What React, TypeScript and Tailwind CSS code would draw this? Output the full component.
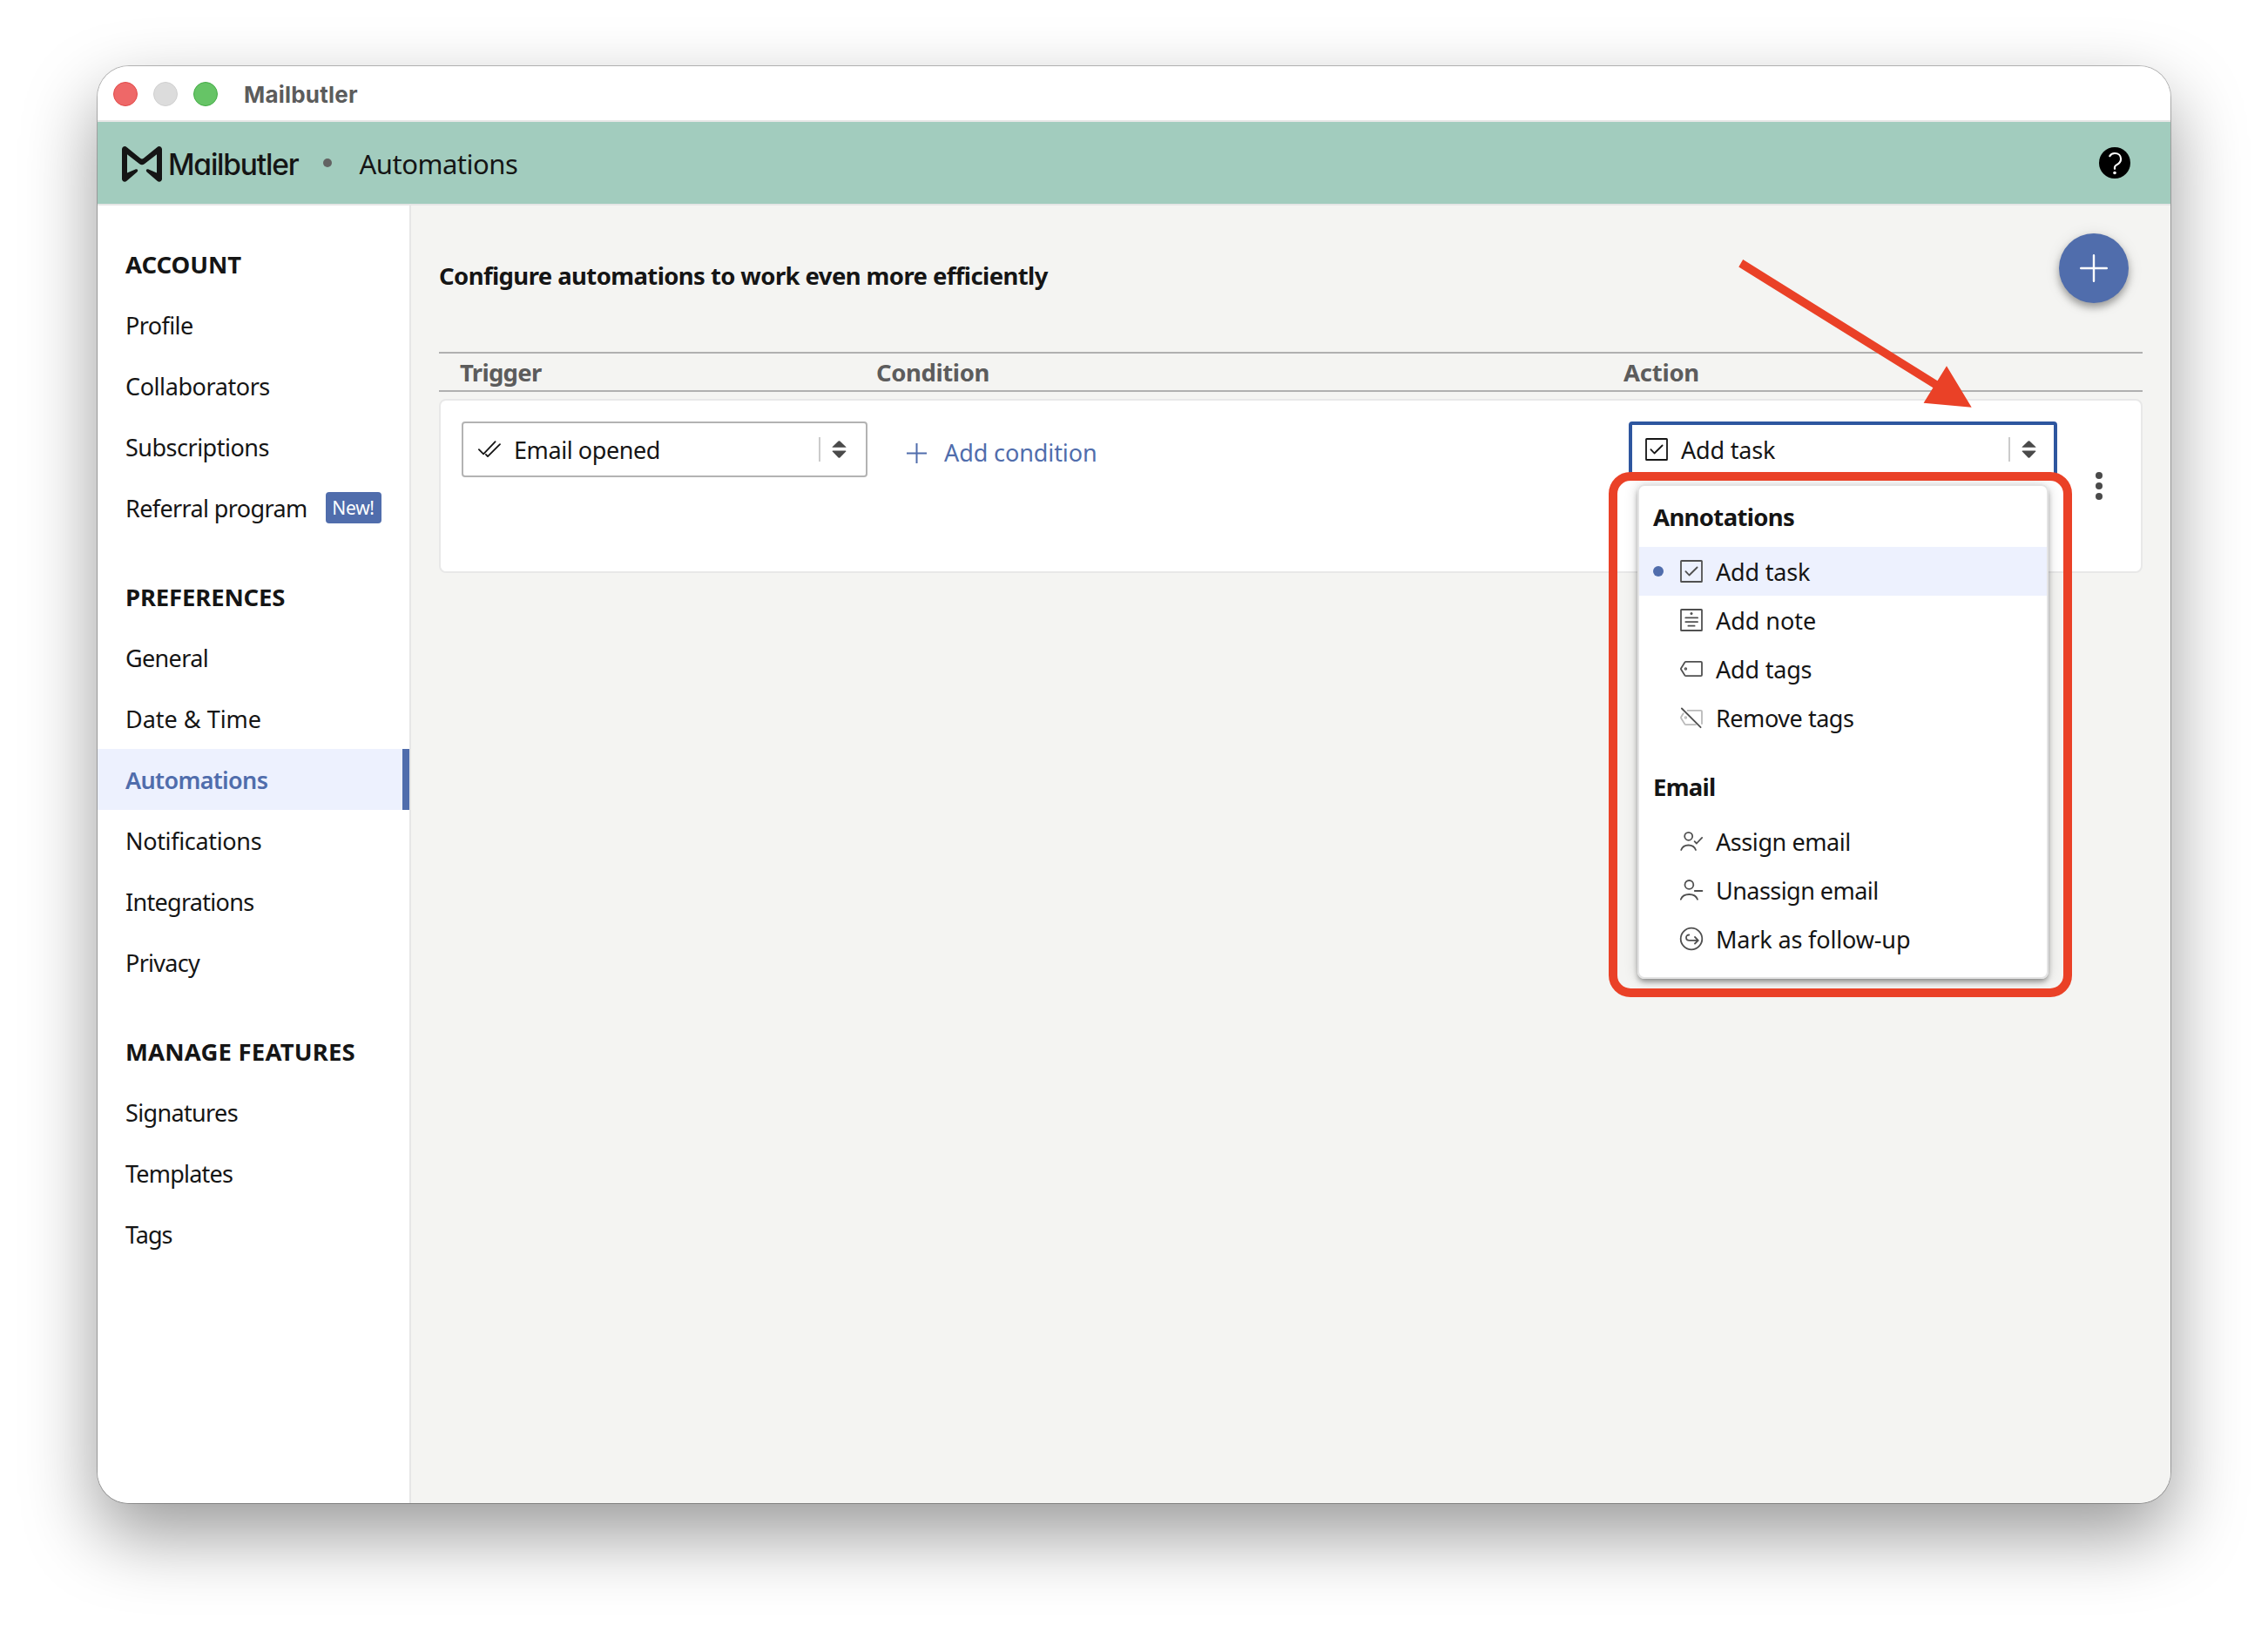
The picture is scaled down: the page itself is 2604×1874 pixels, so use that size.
import type { ReactNode } from "react";
import clsx from "clsx";

interface NavItem {
  label: string;
  tracking: string;
  badge?: string;
  active?: boolean;
}

interface NavSection {
  title: string;
  tracking: string;
  items: NavItem[];
}

interface ActionOption {
  label: string;
  tracking: string;
  icon: ReactNode;
  selected?: boolean;
}

interface ActionGroup {
  title: string;
  tracking: string;
  options: ActionOption[];
}

const sections: NavSection[] = [
  {
    title: "ACCOUNT",
    tracking: "tracking-[-0.05px]",
    items: [
      { label: "Profile", tracking: "tracking-[-0.6px]" },
      { label: "Collaborators", tracking: "tracking-[-0.42px]" },
      { label: "Subscriptions", tracking: "tracking-[-0.5px]" },
      { label: "Referral program", tracking: "tracking-[-0.63px]", badge: "New!" },
    ],
  },
  {
    title: "PREFERENCES",
    tracking: "tracking-[-0.15px]",
    items: [
      { label: "General", tracking: "tracking-[-0.65px]" },
      { label: "Date & Time", tracking: "tracking-[0px]" },
      { label: "Automations", tracking: "tracking-[-0.65px]", active: true },
      { label: "Notifications", tracking: "tracking-[-0.33px]" },
      { label: "Integrations", tracking: "tracking-[-0.7px]" },
      { label: "Privacy", tracking: "tracking-[-0.7px]" },
    ],
  },
  {
    title: "MANAGE FEATURES",
    tracking: "tracking-[0.18px]",
    items: [
      { label: "Signatures", tracking: "tracking-[-0.65px]" },
      { label: "Templates", tracking: "tracking-[-0.8px]" },
      { label: "Tags", tracking: "tracking-[-1px]" },
    ],
  },
];

const actionGroups: ActionGroup[] = [
  {
    title: "Annotations",
    tracking: "tracking-[-0.65px]",
    options: [
      { label: "Add task", tracking: "tracking-[-0.2px]", icon: <TaskIcon />, selected: true },
      { label: "Add note", tracking: "tracking-[-0.05px]", icon: <NoteIcon /> },
      { label: "Add tags", tracking: "tracking-[-0.2px]", icon: <TagIcon /> },
      { label: "Remove tags", tracking: "tracking-[-0.45px]", icon: <RemoveTagIcon /> },
    ],
  },
  {
    title: "Email",
    tracking: "tracking-[-0.7px]",
    options: [
      { label: "Assign email", tracking: "tracking-[-0.42px]", icon: <AssignIcon /> },
      { label: "Unassign email", tracking: "tracking-[-0.55px]", icon: <UnassignIcon /> },
      { label: "Mark as follow-up", tracking: "tracking-[-0.15px]", icon: <FollowUpIcon /> },
    ],
  },
];

function Icon({ children }: { children: ReactNode }) {
  return (
    <svg
      className="h-[26px] w-[26px] shrink-0 overflow-visible"
      viewBox="0 0 26 26"
      fill="none"
      stroke="currentColor"
      strokeWidth="1.8"
      strokeLinecap="round"
      strokeLinejoin="round"
    >
      {children}
    </svg>
  );
}

function TaskIcon() {
  return (
    <Icon>
      <rect x="1" y="1" width="24" height="24" rx="0.6" />
      <path d="M6.4 13.2l4.1 4.3 9.1-9" />
    </Icon>
  );
}

function NoteIcon() {
  return (
    <Icon>
      <rect x="1" y="1" width="24" height="24" rx="0.6" />
      <circle cx="13" cy="5.6" r="1.5" fill="currentColor" stroke="none" />
      <path d="M6.3 10.4h13.8M6.3 15.1h13.8M9.4 19.7h7.2" />
    </Icon>
  );
}

function TagIcon() {
  return (
    <Icon>
      <path d="M6.8 4.9h17.1q1.1 0 1.1 1.1v14q0 1.1-1.1 1.1H6.8q-.9 0-1.4-.7L1.2 13.8q-.5-.8 0-1.6L5.4 5.6q.5-.7 1.4-.7z" />
      <circle cx="6.4" cy="13" r="1.1" strokeWidth="1.3" />
    </Icon>
  );
}

function RemoveTagIcon() {
  return (
    <Icon>
      <g stroke="#bababa">
        <path d="M8.6 4.9h15.3q1.1 0 1.1 1.1v14" />
        <path d="M18 21.1H6.8q-.9 0-1.4-.7L1.2 13.8q-.5-.8 0-1.6l2.5-4" />
        <circle cx="6.4" cy="13" r="1.1" strokeWidth="1.3" />
      </g>
      <path d="M1.9 2.5l21.7 21.7" />
    </Icon>
  );
}

function AssignIcon() {
  return (
    <Icon>
      <circle cx="9.7" cy="7.3" r="4.5" />
      <path d="M1.2 23q2-5.5 8.4-5.5T18 23M16.6 13.2l2.3 2.3 6.3-6.6" />
    </Icon>
  );
}

function UnassignIcon() {
  return (
    <Icon>
      <circle cx="10.4" cy="6.9" r="4.9" />
      <path d="M.8 23.7q2.2-5.7 9.6-5.7t9.6 5.7M16.8 14h8.6" />
    </Icon>
  );
}

function FollowUpIcon() {
  return (
    <Icon>
      <circle cx="13" cy="13" r="12.3" />
      <path d="M10.3 8.5C8.2 8.5 7 9.7 7 11.4c0 2.1 1.4 3.4 3.6 3.4h10M17 11l3.8 3.8L17 18.5" />
    </Icon>
  );
}

function Chevrons() {
  return (
    <svg className="h-5 w-[17px]" viewBox="0 0 17 20" fill="#4a4a4a">
      <path d="M7.6.6q.9-.8 1.8 0l6.8 6.3q.7.9-.4.9H1.2q-1.1 0-.4-.9z" />
      <path d="M7.6 19.4q.9.8 1.8 0l6.8-6.9q.7-.9-.4-.9H1.2q-1.1 0-.4.9z" />
    </svg>
  );
}

function TitleBar() {
  return (
    <div className="flex h-16 shrink-0 items-center border-b-2 border-[#e6e6e6] bg-white pl-[18px]">
      <div className="mt-0.5 flex gap-[18px]">
        <span className="h-7 w-7 rounded-full border border-[#e14b4a] bg-[#ee6868]" />
        <span className="h-7 w-7 rounded-full border border-[#cfcfcf] bg-[#dcdcdc]" />
        <span className="h-7 w-7 rounded-full border border-[#45ac47] bg-[#66c466]" />
      </div>
      <span className="ml-[30px] mt-1 font-['Inter',sans-serif] text-[26px] font-bold leading-8 tracking-[0.2px] text-[#5c5c5c]">
        Mailbutler
      </span>
    </div>
  );
}

function Header() {
  return (
    <div className="flex h-24 shrink-0 items-center border-b-2 border-[#e6e6e6] bg-[#a2ccbe] pl-7 pr-[46px]">
      <svg className="mt-0.5 h-[41px] w-[46px]" viewBox="0 0 46 41" fill="#151515">
        <path d="M0 3.5C0 .6 3.2-.9 5.5.9L21.2 13.7q1.8 1.4 3.6 0L40.5.9C42.8-.9 46 .6 46 3.5V37.5c0 2.9-3.3 4.3-5.5 2.3L28.6 29.5c-1.8-1.7-.4-3.9 2-3L40 30.6V9.2L25.8 20.3q-2.8 2.1-5.6 0L6 9.2v21.4l9.4-4.1c2.4-.9 3.8 1.3 2 3L5.5 39.8C3.3 41.8 0 40.4 0 37.5z" />
      </svg>
      <span className="ml-[7px] mt-1 font-['Inter',sans-serif] text-[33.5px] font-medium leading-10 tracking-[-1.2px] text-[#151515] [font-feature-settings:'cv11']">
        Mailbutler
      </span>
      <span className="ml-7 h-2.5 w-2.5 rounded-full bg-[#636363]" />
      <span className="ml-8 mt-0.5 text-[31px] leading-10 tracking-[-0.5px]">Automations</span>
      <svg className="ml-auto h-9 w-9" viewBox="0 0 36 36" fill="none">
        <circle cx="18" cy="18" r="18" fill="#000" />
        <path
          d="M12.3 10.2C13.3 8.1 15.3 7 18 7c4.2 0 7.1 2.6 7.1 6.5 0 4.1-2.6 5.6-5 6.9-1.5.8-2.1 1.4-2.1 2.8v1.6"
          stroke="#fff"
          strokeWidth="2.2"
          strokeLinecap="round"
        />
        <circle cx="18" cy="29.5" r="1.8" fill="#fff" />
      </svg>
    </div>
  );
}

function Sidebar() {
  return (
    <nav className="flex w-[360px] shrink-0 flex-col gap-8 border-r-2 border-[#e6e6e6] bg-white pt-8">
      {sections.map((section) => (
        <div key={section.title}>
          <div className={clsx("flex h-[70px] items-center pl-8 pt-0.5 text-[27.5px] font-bold", section.tracking)}>
            {section.title}
          </div>
          {section.items.map((item) => (
            <div
              key={item.label}
              className={clsx(
                "flex h-[70px] items-center pl-8",
                item.active && "border-r-8 border-[#506dac] bg-[#edf1fe] font-semibold text-[#506dac]"
              )}
            >
              <span className={clsx("pt-0.5", item.tracking)}>{item.label}</span>
              {item.badge && (
                <span className="ml-[21px] flex h-9 w-16 items-center justify-center rounded bg-[#506dac] text-[21px] tracking-[-0.3px] text-white">
                  {item.badge}
                </span>
              )}
            </div>
          ))}
        </div>
      ))}
    </nav>
  );
}

function ActionMenu() {
  return (
    <div className="absolute left-2.5 top-[72px] w-[472px] overflow-hidden rounded-lg border-2 border-[#e4e4e4] bg-white pb-4">
      {actionGroups.map((group, index) => (
        <div key={group.title} className={clsx(index !== 0 && "mt-4")}>
          <div className={clsx("flex h-[70px] items-center pl-4 pt-0.5 text-[27.5px] font-bold", group.tracking)}>
            {group.title}
          </div>
          {group.options.map((option) => (
            <div
              key={option.label}
              className={clsx("flex h-14 items-center pl-4", option.selected && "bg-[#edf1fe]")}
            >
              <span className={clsx("mr-[19px] h-3 w-3 rounded-full", option.selected && "bg-[#506dac]")} />
              <span className="text-[#505050]">{option.icon}</span>
              <span className={clsx("ml-[15px] pt-0.5", option.tracking)}>{option.label}</span>
            </div>
          ))}
        </div>
      ))}
    </div>
  );
}

function AutomationRow() {
  return (
    <div className="mt-2 flex h-[200px] rounded-lg border-2 border-[#e8e8e8] bg-white pl-6 pr-9 pt-6">
      <div className="flex h-16 w-[466px] items-center rounded border-2 border-[#b3b3b3] pl-[17px] pr-[22px]">
        <svg
          className="h-5 w-[26px]"
          viewBox="0 0 26 20"
          fill="none"
          stroke="#151515"
          strokeWidth="1.8"
          strokeLinecap="round"
          strokeLinejoin="round"
        >
          <path d="M.9 10.2l5.2 5.2L19.6 1.2" />
          <path d="M8.9 15.9l2.1 2.2L25 4.2" />
        </svg>
        <span className="ml-[15px] pt-0.5 tracking-[-0.42px]">Email opened</span>
        <span className="ml-auto mr-[13px] h-7 w-0.5 bg-[#cbcbcb]" />
        <Chevrons />
      </div>

      <div className="ml-[45px] mt-1 flex h-16 grow items-center text-[#506dac]">
        <svg className="h-[23px] w-[23px]" viewBox="0 0 23 23" stroke="currentColor" strokeWidth="2">
          <path d="M11.5 0v23M0 11.5h23" />
        </svg>
        <span className="ml-5 tracking-[-0.1px]">Add condition</span>
      </div>

      <div className="relative h-16 w-[492px]">
        <div className="flex h-16 items-center rounded border-4 border-[#2e569f] pl-[15px] pr-5">
          <TaskIcon />
          <span className="ml-[15px] pt-0.5 tracking-[-0.2px]">Add task</span>
          <span className="ml-auto mr-[13px] h-7 w-0.5 bg-[#cbcbcb]" />
          <Chevrons />
        </div>
        <div className="absolute left-2.5 top-[72px] h-[568px] w-[472px] rounded-lg shadow-[0_4px_6px_-1px_rgba(0,0,0,0.4),0_0_16px_rgba(0,0,0,0.16)]" />
        <ActionMenu />
        <div className="absolute -left-[23px] top-[58px] h-[603px] w-[532px] rounded-[25px] border-10 border-[#ea4127]" />
        <svg
          className="absolute -top-[188px] left-[124px] h-[174px] w-[272px]"
          viewBox="1994 296 272 174"
          fill="#ea4127"
        >
          <path d="M2001.2 298L2224.5 437.3 2235 420.3 2263.7 467.7 2208.6 462.7 2219.4 445.3 1996.3 306.5z" />
        </svg>
      </div>

      <div className="mb-6 ml-9 flex w-6 flex-col items-center justify-center gap-1">
        <span className="h-2 w-2 rounded-full bg-[#4a4a4a]" />
        <span className="h-2 w-2 rounded-full bg-[#4a4a4a]" />
        <span className="h-2 w-2 rounded-full bg-[#4a4a4a]" />
      </div>
    </div>
  );
}

function Automations() {
  return (
    <main className="grow bg-[#f4f4f2] px-8 pt-8">
      <div className="flex h-20 items-center justify-between pr-4">
        <h1 className="mt-[18px] text-[27.5px] font-bold tracking-[-0.6px]">
          Configure automations to work even more efficiently
        </h1>
        <button className="flex h-20 w-20 items-center justify-center rounded-full bg-[#506dac] shadow-[0_5px_8px_rgba(0,0,0,0.32),0_2px_18px_rgba(0,0,0,0.1)]">
          <svg className="h-8 w-8" viewBox="0 0 32 32" stroke="#fff" strokeWidth="2.4" strokeLinecap="round">
            <path d="M16 1.2v29.6M1.2 16h29.6" />
          </svg>
        </button>
      </div>

      <div className="mt-14 flex h-[46px] items-center border-y-2 border-[#b0b0b0] pl-6 pt-0.5 text-[27.5px] font-bold text-[#5c5c5c]">
        <span className="w-[478px] tracking-[-0.7px]">Trigger</span>
        <span className="w-[858px] tracking-[-0.4px]">Condition</span>
        <span className="tracking-[-0.25px]">Action</span>
      </div>

      <AutomationRow />
    </main>
  );
}

export default function App() {
  return (
    <div className="h-[1874px] w-[2604px] bg-white px-28 pt-[76px] font-['Noto_Sans','Open_Sans',sans-serif] text-[27px] leading-9 text-[#151515]">
      <div className="flex h-[1650px] flex-col overflow-hidden rounded-[36px] shadow-[0_0_0_1px_rgba(0,0,0,0.26),0_36px_84px_rgba(0,0,0,0.4)]">
        <TitleBar />
        <Header />
        <div className="flex grow">
          <Sidebar />
          <Automations />
        </div>
      </div>
    </div>
  );
}
